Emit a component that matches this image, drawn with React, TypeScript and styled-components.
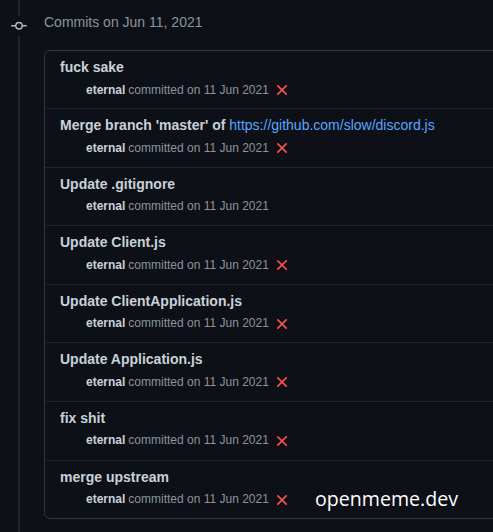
import React from "react";
import styled, { createGlobalStyle } from "styled-components";

const Global = createGlobalStyle`
  html, body { margin: 0; padding: 0; background: #0d1117; overflow: hidden; }
  body { font-family: "Liberation Sans", Arial, sans-serif; }
`;

const Page = styled.div`
  position: relative;
  min-height: 100vh;
  width: 100%;
  box-sizing: border-box;
  padding-top: 12px;
  background: linear-gradient(to right, transparent 18px, #21262d 18px, #21262d 20px, transparent 20px);
  display: grid;
  grid-template-columns: 38px 1fr;
  column-gap: 6px;
  row-gap: 18px;
  align-content: start;
`;

const IconCell = styled.div`
  display: flex;
  align-items: center;
  justify-content: center;
  height: 20px;
  margin-top: 4px;
  margin-bottom: -4px;
`;

const IconBg = styled.span`
  display: flex;
  background: #0d1117;
  padding: 2px 0;
`;

const Heading = styled.h2`
  margin: 0;
  font-size: 14px;
  line-height: 20px;
  font-weight: 400;
  color: #8b949e;
`;

const Card = styled.ol`
  grid-column: 2;
  list-style: none;
  margin: 0 -12px 0 0;
  padding: 0;
  border: 1px solid #30363d;
  border-radius: 6px;
`;

const Row = styled.li`
  padding: 6px 15px 9px;
  border-top: 1px solid #21262d;
  height: 58.6px;
  box-sizing: border-box;
  &:first-child { border-top: none; height: 57px; }
`;

const Title = styled.p`
  margin: 0;
  font-size: 14px;
  line-height: 20px;
  font-weight: 700;
  color: #c9d1d9;
  white-space: nowrap;
`;

const Link = styled.a`
  color: #58a6ff;
  font-weight: 400;
  text-decoration: none;
`;

const Meta = styled.div`
  display: flex;
  align-items: center;
  margin-top: 3px;
  padding-left: 26px;
  font-size: 12px;
  line-height: 18px;
  color: #8b949e;
  white-space: nowrap;
`;

const Author = styled.span`
  font-weight: 700;
  color: #c9d1d9;
  margin-right: 3px;
`;

const Fail = styled.span`
  display: inline-flex;
  margin-left: 4px;
  margin-top: 1px;
  color: #f85149;
`;

const Watermark = styled.div`
  position: absolute;
  left: 315px;
  top: 485px;
  font-family: "Open Sans", "Noto Sans", sans-serif;
  font-size: 19.6px;
  line-height: 28px;
  color: #ffffff;
`;

const CommitIcon = () => (
  <svg width="16" height="16" viewBox="0 0 16 16" fill="#b1bac4">
    <path
      fillRule="evenodd"
      d="M10.5 7.75a2.5 2.5 0 11-5 0 2.5 2.5 0 015 0zm1.43.75a4.002 4.002 0 01-7.860 0H.75a.75.75 0 110-1.5h3.32a4.001 4.001 0 017.86 0h3.32a.75.75 0 110 1.5h-3.32z"
    />
  </svg>
);

const XIcon = () => (
  <svg width="18" height="18" viewBox="0 0 16 16" fill="currentColor">
    <path d="M3.72 3.72a.75.75 0 011.06 0L8 6.94l3.22-3.220a.75.75 0 111.06 1.06L9.06 8l3.22 3.22a.75.75 0 11-1.06 1.06L8 9.06l-3.22 3.22a.75.75 0 01-1.06-1.06L6.94 8 3.72 4.78a.75.75 0 010-1.06z" />
  </svg>
);

type Commit = { title: React.ReactNode; failed: boolean };

const commits: Commit[] = [
  { title: "fuck sake", failed: true },
  {
    title: (
      <>
        Merge branch 'master' of <Link href="#">https://github.com/slow/discord.js</Link>
      </>
    ),
    failed: true,
  },
  { title: "Update .gitignore", failed: false },
  { title: "Update Client.js", failed: true },
  { title: "Update ClientApplication.js", failed: true },
  { title: "Update Application.js", failed: true },
  { title: "fix shit", failed: true },
  { title: "merge upstream", failed: true },
];

export default function App() {
  return (
    <>
      <Global />
      <Page>
        <IconCell>
          <IconBg>
            <CommitIcon />
          </IconBg>
        </IconCell>
        <Heading>Commits on Jun 11, 2021</Heading>
        <Card>
          {commits.map((c, i) => (
            <Row key={i}>
              <Title>{c.title}</Title>
              <Meta>
                <Author>eternal</Author>
                committed on 11 Jun 2021
                {c.failed && (
                  <Fail>
                    <XIcon />
                  </Fail>
                )}
              </Meta>
            </Row>
          ))}
        </Card>
        <Watermark>openmeme.dev</Watermark>
      </Page>
    </>
  );
}
